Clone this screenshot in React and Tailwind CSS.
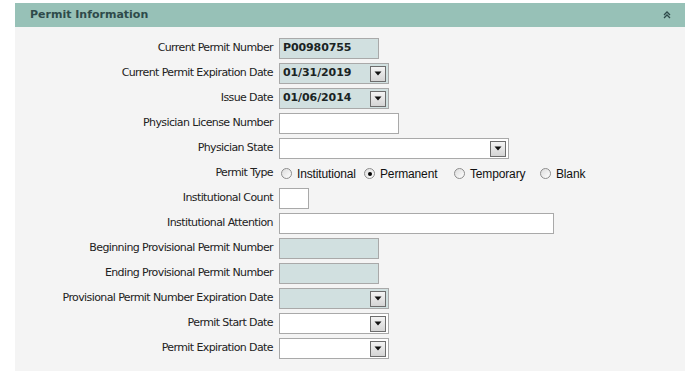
import React from "react";

const labelFont = { fontFamily: '"DejaVu Sans", Verdana, sans-serif' };

function DropBtn() {
  return (
    <span className="ml-auto mr-[2px] flex h-[16px] w-[16px] items-center justify-center border border-[#6d6d6d] bg-gradient-to-b from-[#f4f4f4] to-[#d4d4d4]">
      <svg width="8" height="5" viewBox="0 0 8 5">
        <path d="M0.5 0.5 L7.5 0.5 L4 4.5 Z" fill="#111" />
      </svg>
    </span>
  );
}

function Box({ w, ro, value, drop }) {
  return (
    <div
      className={`flex h-[21px] items-center border border-[#a9a9a9] ${ro ? "bg-[#d1e0e0]" : "bg-white"}`}
      style={{ width: w }}
    >
      {value && (
        <span className="pl-[3px] text-[11px] font-bold text-[#1a2424] tracking-[-0.1px]" style={labelFont}>
          {value}
        </span>
      )}
      {drop && <DropBtn />}
    </div>
  );
}

function Radio({ label, checked }) {
  return (
    <label className="flex items-center gap-[5px]">
      <span className="flex h-[11px] w-[11px] items-center justify-center rounded-full border border-[#8d8d8d] bg-gradient-to-br from-[#dcdcdc] to-white">
        {checked && <span className="h-[4px] w-[4px] rounded-full bg-black" />}
      </span>
      <span className="text-[12px] text-[#111] tracking-[-0.15px]" style={{ fontFamily: '"Liberation Sans", Arial, sans-serif' }}>
        {label}
      </span>
    </label>
  );
}

function Row({ label, children }) {
  return (
    <div className="flex h-[21px] items-center gap-[5px]">
      <div className="w-[259px] shrink-0 pr-[1px] text-right text-[11px] text-[#222] tracking-[-0.6px]" style={labelFont}>
        {label}
      </div>
      {children}
    </div>
  );
}

export default function App() {
  return (
    <div className="h-[377px] w-[691px] bg-white pt-[3px] pl-[15px]">
      <div className="w-[670px] bg-[#f4f4f4]">
        <div className="flex h-[24px] items-center justify-between bg-[#97c1b7] pl-[15px] pr-[14px]">
          <span className="text-[11px] font-bold text-[#2e4a4a]" style={labelFont}>
            Permit Information
          </span>
          <svg width="8" height="8" viewBox="0 0 8 8">
            <path d="M1 4 L4 1 L7 4 M1 7 L4 4 L7 7" fill="none" stroke="#2e4a4a" strokeWidth="1.3" />
          </svg>
        </div>
        <div className="flex flex-col gap-[4px] pt-[11px] pb-[12px]">
          <Row label="Current Permit Number">
            <Box w={100} ro value="P00980755" />
          </Row>
          <Row label="Current Permit Expiration Date">
            <Box w={110} ro value="01/31/2019" drop />
          </Row>
          <Row label="Issue Date">
            <Box w={110} ro value="01/06/2014" drop />
          </Row>
          <Row label="Physician License Number">
            <Box w={120} />
          </Row>
          <Row label="Physician State">
            <Box w={230} drop />
          </Row>
          <Row label="Permit Type">
            <div className="flex items-center">
              <div className="w-[85px] pl-[2px]"><Radio label="Institutional" /></div>
              <div className="w-[90px]"><Radio label="Permanent" checked /></div>
              <div className="w-[86px]"><Radio label="Temporary" /></div>
              <Radio label="Blank" />
            </div>
          </Row>
          <Row label="Institutional Count">
            <Box w={30} />
          </Row>
          <Row label="Institutional Attention">
            <Box w={275} />
          </Row>
          <Row label="Beginning Provisional Permit Number">
            <Box w={100} ro />
          </Row>
          <Row label="Ending Provisional Permit Number">
            <Box w={100} ro />
          </Row>
          <Row label="Provisional Permit Number Expiration Date">
            <Box w={110} ro drop />
          </Row>
          <Row label="Permit Start Date">
            <Box w={110} drop />
          </Row>
          <Row label="Permit Expiration Date">
            <Box w={110} drop />
          </Row>
        </div>
      </div>
    </div>
  );
}
